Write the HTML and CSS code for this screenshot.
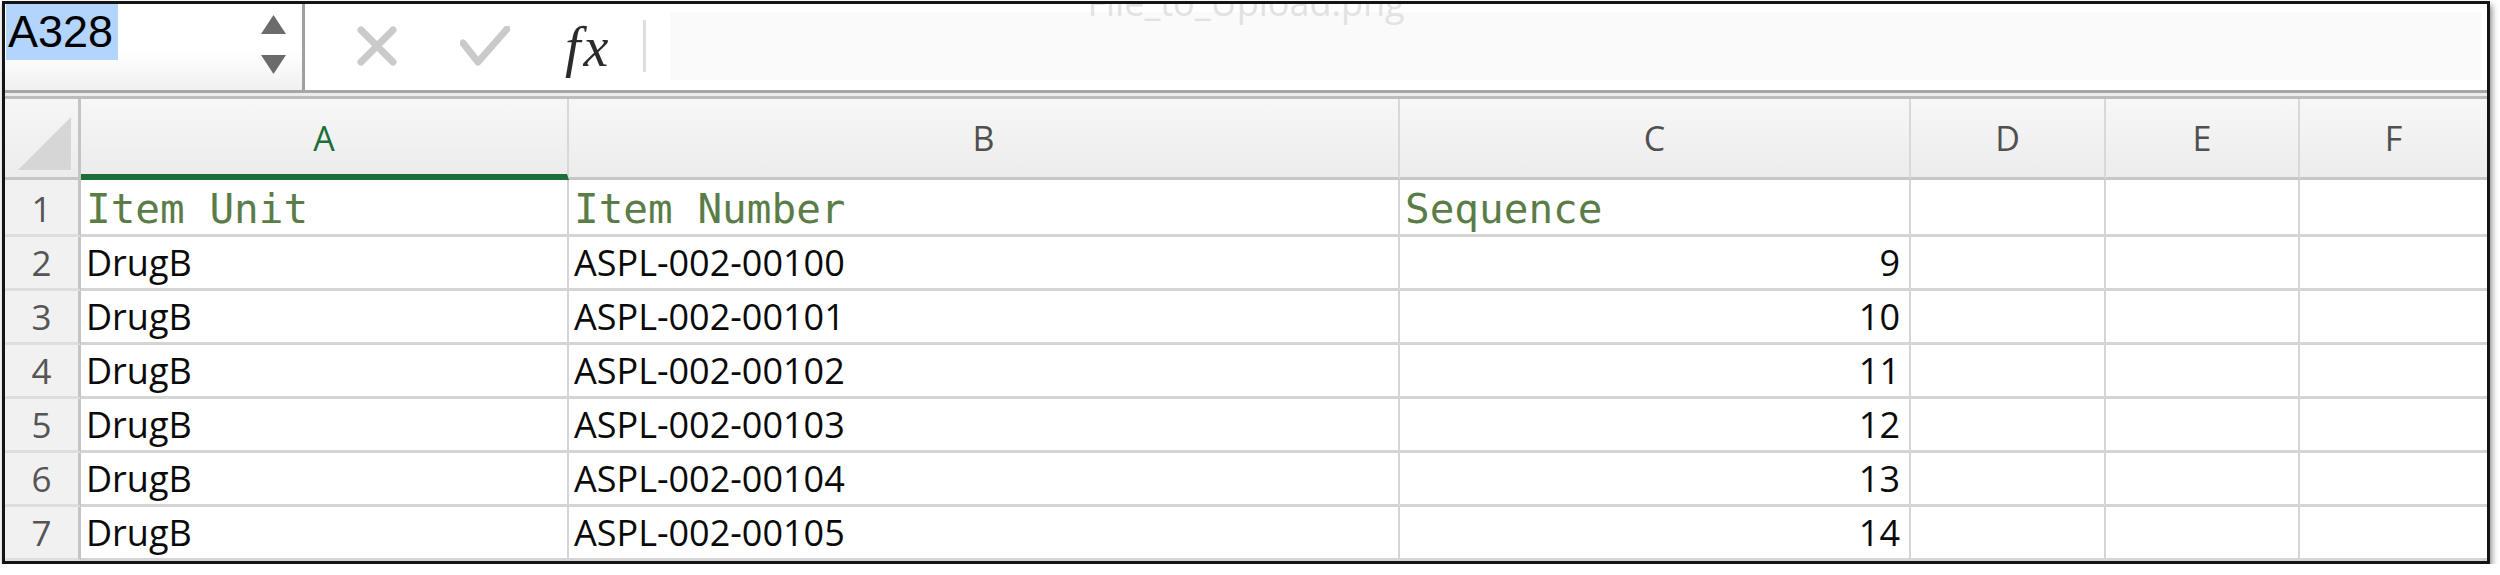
FILE: index.html
```html
<!DOCTYPE html>
<html lang="en">
<head>
    <meta charset="UTF-8">
    <title>File_to_Upload.png</title>
    <link rel="stylesheet" href="styles.css">
</head>
<body>
    <div class="window">
        <div class="title">File_to_Upload.png</div>

        <div class="formula-bar">
            <div class="name-box">
                <span class="cell-ref">A328</span>
                <div class="spinner">
                    <svg width="25" height="19" viewBox="0 0 25 19"><polygon points="12.5,0 25,19 0,19"/></svg>
                    <svg width="25" height="19" viewBox="0 0 25 19"><polygon points="0,0 25,0 12.5,19"/></svg>
                </div>
            </div>
            <div class="divider"></div>
            <svg class="icon-cancel" width="40" height="40" viewBox="0 0 40 40">
                <line x1="4" y1="4" x2="36" y2="36"/>
                <line x1="36" y1="4" x2="4" y2="36"/>
            </svg>
            <svg class="icon-enter" width="50" height="40" viewBox="0 0 50 40">
                <polyline points="3,17 18,36 47,3"/>
            </svg>
            <span class="fx">fx</span>
            <div class="fx-divider"></div>
            <div class="formula-input"></div>
        </div>

        <div class="bar-rule"></div>

        <div class="sheet">
            <div class="corner">
                <svg width="53" height="53" viewBox="0 0 53 53"><polygon points="0,53 53,0 53,53"/></svg>
            </div>
            <div class="col-head active">A</div>
            <div class="col-head">B</div>
            <div class="col-head">C</div>
            <div class="col-head">D</div>
            <div class="col-head">E</div>
            <div class="col-head">F</div>

            <div class="row-head">1</div>
            <div class="cell label">Item Unit</div>
            <div class="cell label">Item Number</div>
            <div class="cell label">Sequence</div>
            <div class="cell"></div>
            <div class="cell"></div>
            <div class="cell"></div>

            <div class="row-head">2</div>
            <div class="cell">DrugB</div>
            <div class="cell">ASPL-002-00100</div>
            <div class="cell num">9</div>
            <div class="cell"></div>
            <div class="cell"></div>
            <div class="cell"></div>

            <div class="row-head">3</div>
            <div class="cell">DrugB</div>
            <div class="cell">ASPL-002-00101</div>
            <div class="cell num">10</div>
            <div class="cell"></div>
            <div class="cell"></div>
            <div class="cell"></div>

            <div class="row-head">4</div>
            <div class="cell">DrugB</div>
            <div class="cell">ASPL-002-00102</div>
            <div class="cell num">11</div>
            <div class="cell"></div>
            <div class="cell"></div>
            <div class="cell"></div>

            <div class="row-head">5</div>
            <div class="cell">DrugB</div>
            <div class="cell">ASPL-002-00103</div>
            <div class="cell num">12</div>
            <div class="cell"></div>
            <div class="cell"></div>
            <div class="cell"></div>

            <div class="row-head">6</div>
            <div class="cell">DrugB</div>
            <div class="cell">ASPL-002-00104</div>
            <div class="cell num">13</div>
            <div class="cell"></div>
            <div class="cell"></div>
            <div class="cell"></div>

            <div class="row-head">7</div>
            <div class="cell">DrugB</div>
            <div class="cell">ASPL-002-00105</div>
            <div class="cell num">14</div>
            <div class="cell"></div>
            <div class="cell"></div>
            <div class="cell"></div>
        </div>
    </div>
</body>
</html>
```

FILE: styles.css
```css
body {
    margin: 0;
    background: #fff;
    font-family: 'Open Sans', Arial, sans-serif;
}
.window {
    position: relative;
    box-sizing: border-box;
    width: 2488px;
    height: 563px;
    margin: 1px 0 0 2px;
    border: 3px solid #141414;
    box-shadow: 2px 4px 6px rgba(0, 0, 0, 0.45);
    overflow: hidden;
    background: #fff;
}
/* window title, mostly hidden behind the top edge */
.title {
    position: absolute;
    top: -19px;
    left: 0;
    right: 0;
    text-align: center;
    font-size: 36px;
    line-height: 36px;
    color: #e2e2e2;
    z-index: 2;
}

/* formula bar */
.formula-bar {
    display: flex;
    align-items: flex-start;
    height: 86px;
}
.name-box {
    display: flex;
    justify-content: space-between;
    width: 297px;
    height: 100%;
    background: linear-gradient(to bottom, #fff 55%, #f0f0f0);
}
.cell-ref {
    height: 56px;
    margin-left: 1px;
    padding: 0 5px 0 2px;
    font-family: 'Liberation Sans', Arial, sans-serif;
    font-size: 45px;
    line-height: 56px;
    color: #000;
    background: #b3d4fc;
}
.spinner {
    display: flex;
    flex-direction: column;
    gap: 21px;
    padding-top: 11px;
    margin-right: 16px;
}
.spinner polygon {
    fill: #6b6b6b;
}
.divider {
    width: 3px;
    height: 100%;
    background: #a0a0a0;
}
.icon-cancel,
.icon-enter {
    margin-top: 22px;
    fill: none;
    stroke: #cacaca;
    stroke-width: 7;
    stroke-linecap: round;
    stroke-linejoin: round;
}
.icon-cancel {
    margin-left: 52px;
}
.icon-enter {
    margin-left: 63px;
}
.fx {
    width: 56px;
    margin-left: 55px;
    margin-top: 14px;
    font-family: 'Liberation Serif', 'Times New Roman', serif;
    font-style: italic;
    font-size: 56px;
    line-height: 58px;
    letter-spacing: 3px;
    color: #2b2b2b;
}
.fx-divider {
    width: 3px;
    height: 52px;
    margin-left: 22px;
    margin-top: 16px;
    background: #dedede;
}
.formula-input {
    flex: 1;
    height: 68px;
    margin: 8px 5px 0 24px;
    background: #fafafa;
}
.bar-rule {
    box-sizing: border-box;
    height: 9px;
    border-top: 3px solid #a6a6a6;
    border-bottom: 3px solid #bcbcbc;
    background: #ececec;
}

/* grid */
.sheet {
    display: grid;
    grid-template-columns: 76px 488px 831px 511px 195px 194px 1fr;
    grid-template-rows: 81px 57px repeat(6, 54px);
}
.sheet > div {
    box-sizing: border-box;
}
.sheet > div:nth-child(7n) {
    border-right: none;
}
.corner {
    display: flex;
    justify-content: flex-end;
    align-items: flex-end;
    padding: 0 7px 7px 0;
    background: linear-gradient(to bottom, #f6f6f6, #ececec);
    border-right: 3px solid #c4c4c4;
    border-bottom: 3px solid #c6c6c6;
}
.corner polygon {
    fill: #d6d6d6;
}
.col-head {
    display: flex;
    justify-content: center;
    align-items: center;
    font-size: 34px;
    color: #505050;
    background: linear-gradient(to bottom, #f7f7f7, #ececec);
    border-right: 2px solid #d8d8d8;
    border-bottom: 3px solid #c6c6c6;
}
.col-head.active {
    color: #1e6e3c;
    border-bottom: 6px solid #1e6e3c;
    padding-top: 3px;
}
.row-head {
    display: flex;
    justify-content: center;
    align-items: flex-end;
    padding-bottom: 2px;
    font-size: 35px;
    color: #555;
    background: #f1f1f1;
    border-right: 3px solid #c4c4c4;
    border-bottom: 3px solid #dedede;
}
.cell {
    display: flex;
    align-items: flex-end;
    padding: 0 9px 1px 5px;
    font-size: 36px;
    color: #0a0a0a;
    white-space: nowrap;
    overflow: hidden;
    border-right: 2px solid #d5d5d5;
    border-bottom: 3px solid #d5d5d5;
}
.cell.num {
    justify-content: flex-end;
}
.cell.label {
    padding-bottom: 1px;
    font-family: 'DejaVu Sans Mono', 'Liberation Mono', monospace;
    font-size: 41px;
    color: #5a7d48;
}
```
